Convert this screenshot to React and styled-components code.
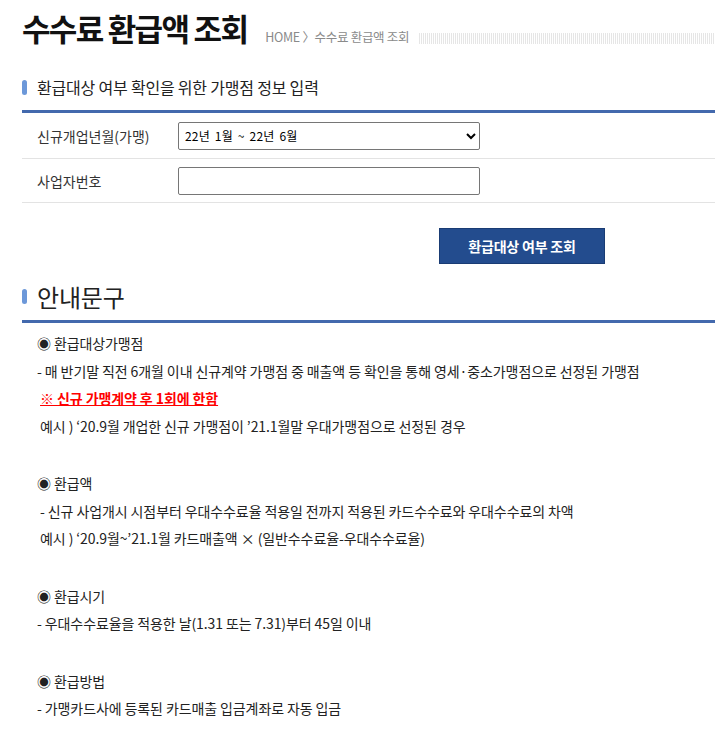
import styled, { createGlobalStyle } from "styled-components";

const GlobalStyle = createGlobalStyle`
body {
  margin: 0;
  background: #fff;
  font-family: "Noto Sans CJK KR", "Noto Sans", sans-serif;
  color: #222;
}
`;

const Page = styled.main`
padding: 0 0 0 22px;
`;

const TitleRow = styled.header`
display: flex;
align-items: flex-end;
padding-top: 6px;
height: 40px;
`;

const Title = styled.h1`
margin: 0;
font-size: 31px;
font-weight: 700;
letter-spacing: -1.7px;
line-height: 36px;
color: #111;
`;

const Breadcrumb = styled.span`
margin-left: 18px;
margin-bottom: 1px;
font-size: 12.5px;
color: #8a8a8a;
letter-spacing: -0.3px;
line-height: 16px;
`;

const Stripes = styled.div`
flex: 1;
height: 11px;
margin: 0 0 2px 10px;
background: repeating-linear-gradient(90deg, #e6e6e6 0 1px, #fff 1px 2px);
`;

const SectionHead = styled.h2`
display: flex;
align-items: center;
gap: 10px;
margin: ${(p) => p.$top}px 0 0;
padding-bottom: ${(p) => p.$pb}px;
box-sizing: border-box;
font-weight: 400;
font-size: ${(p) => p.$size}px;
color: #222;
height: ${(p) => p.$h}px;
border-bottom: 3px solid #4369ad;
letter-spacing: -0.2px;
&::before {
  content: "";
  width: 5px;
  height: 15px;
  border-radius: 3px;
  background: #6c98d9;
}
`;

const FormRow = styled.div`
display: flex;
align-items: center;
height: ${(p) => p.$h}px;
border-bottom: 1px solid #e3e3e3;
`;

const Label = styled.label`
width: 141px;
padding-left: 15px;
font-size: 14px;
color: #333;
`;

const Select = styled.select`
width: 302px;
height: 28px;
border: 1px solid #767676;
border-radius: 2px;
font-family: "Noto Sans CJK KR", sans-serif;
font-size: 12px;
letter-spacing: 0.2px;
word-spacing: 2px;
padding: 0 2px;
color: #000;
background: #fff;
`;

const Input = styled.input`
width: 302px;
height: 28px;
box-sizing: border-box;
border: 1px solid #767676;
border-radius: 2px;
`;

const ButtonBar = styled.div`
display: flex;
padding: 25px 0 0 417px;
`;

const Button = styled.button`
width: 166px;
height: 36px;
background: #234c8e;
border: 1px solid #1a3c74;
color: #fff;
font-family: "Noto Sans CJK KR", sans-serif;
font-size: 14px;
font-weight: 700;
letter-spacing: -0.2px;
cursor: pointer;
`;

const Notice = styled.section`
padding: 7px 0 0 15px;
font-size: 14px;
color: #222;
letter-spacing: -0.1px;
`;

const Group = styled.div`
margin-bottom: 30px;
&:last-child {
  margin-bottom: 0;
}
`;

const Line = styled.p`
margin: 0;
line-height: 27.5px;
white-space: pre;
`;

const Warn = styled.span`
color: #ff0000;
font-weight: 700;
text-decoration: underline;
`;

export default function App() {
  return (
    <>
      <GlobalStyle />
      <Page>
        <TitleRow>
          <Title>수수료 환급액 조회</Title>
          <Breadcrumb>HOME 〉수수료 환급액 조회</Breadcrumb>
          <Stripes />
        </TitleRow>

        <SectionHead $top={22} $size={16} $h={45} $pb={4}>
          환급대상 여부 확인을 위한 가맹점 정보 입력
        </SectionHead>
        <FormRow $h={45}>
          <Label>신규개업년월(가맹)</Label>
          <Select defaultValue="2201">
            <option value="2201">22년 1월 ~ 22년 6월</option>
            <option value="2107">21년 7월 ~ 21년 12월</option>
          </Select>
        </FormRow>
        <FormRow $h={43}>
          <Label>사업자번호</Label>
          <Input type="text" />
        </FormRow>

        <ButtonBar>
          <Button>환급대상 여부 조회</Button>
        </ButtonBar>

        <SectionHead $top={18} $size={24} $h={41} $pb={10}>
          안내문구
        </SectionHead>
        <Notice>
          <Group>
            <Line>◉ 환급대상가맹점</Line>
            <Line>- 매 반기말 직전 6개월 이내 신규계약 가맹점 중 매출액 등 확인을 통해 영세·중소가맹점으로 선정된 가맹점</Line>
            <Line> <Warn>※ 신규 가맹계약 후 1회에 한함</Warn></Line>
            <Line> 예시 ) ‘20.9월 개업한 신규 가맹점이 ’21.1월말 우대가맹점으로 선정된 경우</Line>
          </Group>
          <Group>
            <Line>◉ 환급액</Line>
            <Line> - 신규 사업개시 시점부터 우대수수료율 적용일 전까지 적용된 카드수수료와 우대수수료의 차액</Line>
            <Line> 예시 ) ‘20.9월~’21.1월 카드매출액 × (일반수수료율-우대수수료율)</Line>
          </Group>
          <Group>
            <Line>◉ 환급시기</Line>
            <Line>- 우대수수료율을 적용한 날(1.31 또는 7.31)부터 45일 이내</Line>
          </Group>
          <Group>
            <Line>◉ 환급방법</Line>
            <Line>- 가맹카드사에 등록된 카드매출 입금계좌로 자동 입금</Line>
          </Group>
        </Notice>
      </Page>
    </>
  );
}
